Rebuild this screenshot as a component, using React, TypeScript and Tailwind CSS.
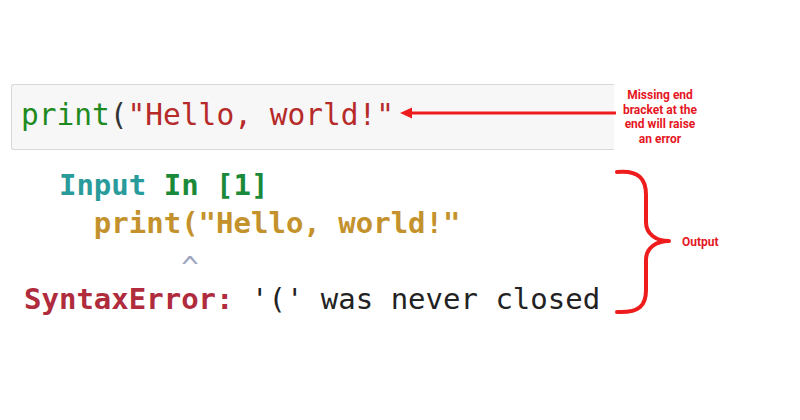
import React from 'react';

const mono = { fontFamily: '"DejaVu Sans Mono", "Liberation Mono", monospace' };

const Arrow = () => (
  <svg className="absolute left-[387px] top-[22px]" width="218" height="14" viewBox="0 0 218 14">
    <path d="M2 7 L14 1.5 L14 12.5 Z" fill="#ee1c1c" />
    <line x1="12" y1="7" x2="218" y2="7" stroke="#ee1c1c" strokeWidth="3" />
  </svg>
);

const Brace = () => (
  <svg width="60" height="152" viewBox="0 0 60 152" className="shrink-0">
    <path
      d="M5 6 C28 4 34 14 34 29 L34 56 C34 68 44 75 57 75 C44 75 34 82 34 94 L34 124 C34 139 28 147 5 146"
      fill="none"
      stroke="#ee1c1c"
      strokeWidth="4"
      strokeLinecap="round"
      strokeLinejoin="round"
    />
  </svg>
);

export default function App() {
  return (
    <div className="w-[800px] h-[420px] bg-white pt-[84px] pl-[11px]">
      {/* code cell + note */}
      <div className="relative flex items-start">
        <div className="w-[603px] h-[66px] bg-[#f7f7f7] border border-r-0 border-[#d8d8d8] rounded-l-[3px] pl-[9px] pt-[14px]">
          <div className="text-[29.5px] leading-[32px] whitespace-pre" style={mono}>
            <span className="text-[#1f8a1f]">print</span>
            <span className="text-[#333]">(</span>
            <span className="text-[#b62a2a]">"Hello, world!"</span>
          </div>
        </div>
        <div
          className="w-[92px] mt-[4px] text-center text-[12px] leading-[14.5px] font-bold text-[#e5171f]"
          style={{ fontFamily: 'Roboto, "Noto Sans", sans-serif' }}
        >
          Missing end
          <br />
          bracket at the
          <br />
          end will raise
          <br />
          an error
        </div>
        <Arrow />
      </div>

      {/* output */}
      <div className="flex items-center mt-[16px]">
        <div className="w-[601px] pl-[13px] text-[29px] leading-[38px] whitespace-pre" style={mono}>
          <div>
            {'  '}
            <span className="text-[#2a9b9b] font-bold">Input</span>{' '}
            <span className="text-[#1a8a3a] font-bold">In [1]</span>
          </div>
          <div className="text-[#c4922c] font-bold">{'    print("Hello, world!"'}</div>
          <div className="text-[#9ea6bf]">
            {'         '}
            <span className="relative top-[6px]">^</span>
          </div>
          <div className="text-[#222]">
            <span className="text-[#b02c3c] font-bold">SyntaxError:</span>
            {" '(' was never closed"}
          </div>
        </div>
        <Brace />
        <div
          className="ml-[10px] text-[12px] font-bold text-[#e5171f]"
          style={{ fontFamily: 'Roboto, "Noto Sans", sans-serif' }}
        >
          Output
        </div>
      </div>
    </div>
  );
}
